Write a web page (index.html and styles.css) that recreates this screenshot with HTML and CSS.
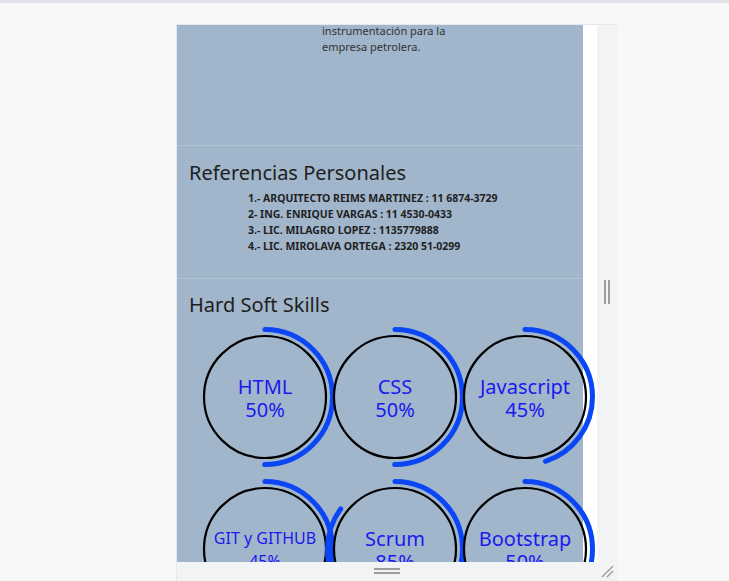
FILE: index.html
```html
<!DOCTYPE html>
<html lang="es">
<head>
  <meta charset="UTF-8">
  <meta name="viewport" content="width=device-width, initial-scale=1.0">
  <title>Curriculum</title>
  <link rel="stylesheet" href="styles.css">
</head>
<body>

  <div class="topbar"></div>

  <div class="device">
    <div class="screen">
      <div class="viewport">
        <div class="page">

          <div class="section exp">
            <p class="desc">instrumentación para la<br>empresa petrolera.</p>
          </div>

          <div class="section refs">
            <h2>Referencias Personales</h2>
            <ul class="reflist">
              <li>1.- ARQUITECTO REIMS MARTINEZ : 11 6874-3729</li>
              <li>2- ING. ENRIQUE VARGAS : 11 4530-0433</li>
              <li>3.- LIC. MILAGRO LOPEZ : 1135779888</li>
              <li>4.- LIC. MIROLAVA ORTEGA : 2320 51-0299</li>
            </ul>
          </div>

          <div class="section skills">
            <h2>Hard Soft Skills</h2>
            <div class="skillgrid" id="skillgrid"></div>
          </div>

        </div>
      </div>
      <div class="scrollcol">
        <div class="grip-v"></div>
      </div>
    </div>
    <div class="bottombar">
      <div class="grip-h"></div>
      <svg class="resize" width="14" height="14" viewBox="0 0 14 14">
        <line x1="2" y1="13" x2="13" y2="2" stroke="#9a9a9a" stroke-width="1.3"/>
        <line x1="7" y1="13" x2="13" y2="7" stroke="#9a9a9a" stroke-width="1.3"/>
      </svg>
    </div>
  </div>

  <script>
    var skills = [
      ["HTML", 50], ["CSS", 50], ["Javascript", 45],
      ["GIT y GITHUB", 45], ["Scrum", 85], ["Bootstrap", 50]
    ];
    var grid = document.getElementById("skillgrid");
    var r = 67.5;
    var len = 2 * Math.PI * r;

    for (var i = 0; i < skills.length; i++)
    {
      var name = skills[i][0];
      var pct = skills[i][1];
      var dash = len * pct / 100;
      var small = name.length > 10 ? " small" : "";
      grid.innerHTML +=
        "<div class='skill'>" +
          "<svg class='ring' width='150' height='150' viewBox='0 0 150 150'>" +
            "<circle cx='75' cy='75' r='61' fill='none' stroke='#000' stroke-width='2.2'/>" +
            "<circle cx='75' cy='75' r='" + r + "' fill='none' stroke='#0a46f5' stroke-width='5' stroke-linecap='round'" +
            " stroke-dasharray='" + dash + " " + len + "' transform='rotate(-90 75 75)'/>" +
          "</svg>" +
          "<span class='label" + small + "'>" + name + "<br>" + pct + "%</span>" +
        "</div>";
    }
  </script>
</body>
</html>
```

FILE: styles.css
```css
body
{
  margin:0;
  background-color:#f8f8f8;
  font-family:'Noto Sans', 'Open Sans', sans-serif;
  height:581px;
  overflow:hidden;
}

.topbar
{
  height:3px;
  background-color:#dee1e6;
}

.device
{
  margin:21px 0 0 176px;
  width:441px;
  border-left:1px solid #e6e8eb;
  border-top:1px solid #e6e8eb;
}

.screen
{
  display:flex;
  height:537px;
}

.viewport
{
  width:420px;
  height:537px;
  overflow:hidden;
  background-color:#fff;
}

.page
{
  width:406px;
  background-color:#a1b5cb;
}

.section
{
  border-bottom:1px solid #b3c3d6;
}

.exp
{
  height:122px;
}

.desc
{
  margin:-2px 0 0 145px;
  font-size:11px;
  line-height:16px;
  color:#333;
}

h2
{
  margin:0;
  padding-left:12px;
  font-size:20px;
  font-weight:400;
  line-height:28px;
  color:#1e1e1e;
}

.refs
{
  padding:13px 0 24px 0;
}

.reflist
{
  list-style:none;
  margin:3px 0 0 71px;
  padding:0;
  font-size:10.5px;
  font-weight:700;
  line-height:16px;
  color:#222;
}

.skills
{
  padding-top:12px;
  border-bottom:none;
}

.skillgrid
{
  display:grid;
  grid-template-columns:repeat(3, 130px);
  padding-left:23px;
  margin-top:2px;
}

.skill
{
  position:relative;
  height:152px;
  display:flex;
  align-items:center;
  justify-content:center;
}

.ring
{
  position:absolute;
  left:-10px;
  top:1px;
  overflow:visible;
}

.label
{
  position:relative;
  text-align:center;
  font-size:20px;
  line-height:23px;
  color:#1a1aef;
  margin-top:2px;
}

.label.small
{
  font-size:16px;
}

.scrollcol
{
  width:20px;
  background-color:#f1f3f4;
  display:flex;
  justify-content:center;
  padding-top:255px;
  box-sizing:border-box;
}

.grip-v
{
  width:2px;
  height:24px;
  border-left:2px solid #9c9c9c;
  border-right:2px solid #9c9c9c;
}

.bottombar
{
  position:relative;
  height:19px;
  background-color:#f1f3f4;
}

.grip-h
{
  position:absolute;
  left:197px;
  top:6px;
  width:26px;
  height:2px;
  border-top:2px solid #9c9c9c;
  border-bottom:2px solid #9c9c9c;
}

.resize
{
  position:absolute;
  right:4px;
  bottom:3px;
}
```
